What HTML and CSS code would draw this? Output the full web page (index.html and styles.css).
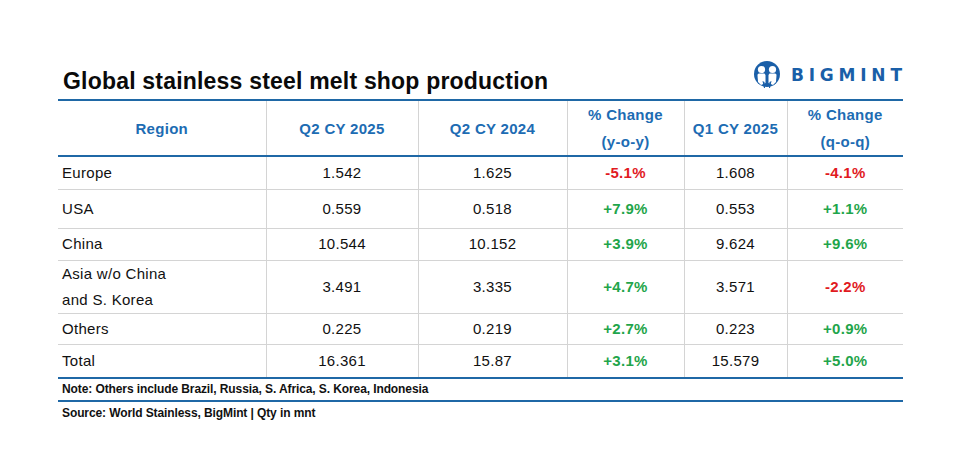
FILE: index.html
```html
<!DOCTYPE html>
<html>
<head>
<meta charset="utf-8">
<link rel="stylesheet" href="styles.css">
</head>
<body>
<div class="page">
  <div class="head">
    <h1 class="title">Global stainless steel melt shop production</h1>
    <div class="logo">
      <svg class="logo-icon" width="30" height="28" viewBox="0 0 30 28">
        <circle cx="15" cy="13" r="13" fill="#1a5fa8"/>
        <circle cx="9.5" cy="8.5" r="3.6" fill="#fff"/>
        <circle cx="20.5" cy="8.5" r="3.6" fill="#fff"/>
        <path d="M5.5 14 Q5.5 12.5 7 12.5 L12.5 12.5 L13.5 14 L13.5 22 L9 24 L6 21 Z" fill="#fff"/>
        <path d="M24.5 14 Q24.5 12.5 23 12.5 L17.5 12.5 L16.5 14 L16.5 22 L21 24 L24 21 Z" fill="#fff"/>
        <path d="M10.5 20 L12 27 L13 27 L12.5 21 Z M19.5 20 L18 27 L17 27 L17.5 21 Z" fill="#1a5fa8"/>
      </svg>
      <span class="logo-text">BIGMINT</span>
    </div>
  </div>
  <table class="data">
    <colgroup>
      <col class="c1"><col class="c2"><col class="c3"><col class="c4"><col class="c5"><col class="c6">
    </colgroup>
    <thead>
      <tr>
        <th>Region</th>
        <th>Q2 CY 2025</th>
        <th>Q2 CY 2024</th>
        <th>% Change<br>(y-o-y)</th>
        <th>Q1 CY 2025</th>
        <th>% Change<br>(q-o-q)</th>
      </tr>
    </thead>
    <tbody>
      <tr><td class="reg">Europe</td><td>1.542</td><td>1.625</td><td class="neg">-5.1%</td><td>1.608</td><td class="neg">-4.1%</td></tr>
      <tr><td class="reg">USA</td><td>0.559</td><td>0.518</td><td class="pos">+7.9%</td><td>0.553</td><td class="pos">+1.1%</td></tr>
      <tr><td class="reg">China</td><td>10.544</td><td>10.152</td><td class="pos">+3.9%</td><td>9.624</td><td class="pos">+9.6%</td></tr>
      <tr><td class="reg">Asia w/o China<br>and S. Korea</td><td>3.491</td><td>3.335</td><td class="pos">+4.7%</td><td>3.571</td><td class="neg">-2.2%</td></tr>
      <tr><td class="reg">Others</td><td>0.225</td><td>0.219</td><td class="pos">+2.7%</td><td>0.223</td><td class="pos">+0.9%</td></tr>
      <tr><td class="reg">Total</td><td>16.361</td><td>15.87</td><td class="pos">+3.1%</td><td>15.579</td><td class="pos">+5.0%</td></tr>
    </tbody>
  </table>
  <div class="note">Note: Others include Brazil, Russia, S. Africa, S. Korea, Indonesia</div>
  <div class="source">Source: World Stainless, BigMint | Qty in mnt</div>
</div>
</body>
</html>
```

FILE: styles.css
```css
html, body {
  margin: 0;
  padding: 0;
  background: #fff;
}
.page {
  width: 845px;
  margin-left: 58px;
  padding-top: 60px;
  font-family: "Liberation Sans", Arial, sans-serif;
  color: #111;
}
.head {
  display: flex;
  justify-content: space-between;
  align-items: flex-end;
  height: 39px;
}
.title {
  margin: 0 0 4px 5px;
  font-size: 23px;
  line-height: 28px;
  font-weight: bold;
  letter-spacing: 0.2px;
  color: #0a0a0a;
}
.logo {
  display: flex;
  align-items: center;
  gap: 9px;
  margin-bottom: 10px;
  margin-right: 1px;
}
.logo-icon {
  display: block;
}
.logo-text {
  font-family: "DejaVu Sans", sans-serif;
  font-size: 17px;
  line-height: 20px;
  font-weight: bold;
  letter-spacing: 4.8px;
  margin-right: -4.8px;
  color: #1a5fa8;
}
.data {
  width: 845px;
  border-collapse: collapse;
  table-layout: fixed;
  font-size: 15px;
  letter-spacing: 0.3px;
}
.c1 { width: 208px; }
.c2 { width: 152px; }
.c3 { width: 149px; }
.c4 { width: 117px; }
.c5 { width: 103px; }
.c6 { width: 116px; }
.data th {
  color: #1d6cb3;
  font-weight: bold;
  line-height: 27px;
  height: 49px;
  padding: 0;
  text-align: center;
  border-top: 2px solid #1f68a6;
  border-bottom: 2px solid #1f68a6;
  border-left: 1px solid #d4d4d4;
}
.data th:first-child,
.data td:first-child {
  border-left: none;
}
.data td {
  padding: 0;
  text-align: center;
  line-height: 26px;
  border-top: 1px solid #d4d4d4;
  border-left: 1px solid #d4d4d4;
}
.data td.reg {
  text-align: left;
  padding-left: 4px;
}
.data tbody tr:first-child td { border-top: none; }
.data tbody tr:nth-child(1) { height: 33px; }
.data tbody tr:nth-child(2) { height: 39px; }
.data tbody tr:nth-child(3) { height: 32px; }
.data tbody tr:nth-child(4) { height: 53px; }
.data tbody tr:nth-child(5) { height: 31px; }
.data tbody tr:nth-child(6) { height: 34px; }
.data tbody tr:last-child td {
  border-bottom: 2px solid #1f68a6;
}
.data td.neg {
  color: #e11b1f;
  font-weight: bold;
}
.data td.pos {
  color: #1fa54b;
  font-weight: bold;
}
.note {
  font-size: 12px;
  font-weight: bold;
  letter-spacing: -0.1px;
  line-height: 21px;
  padding-left: 4px;
  border-bottom: 2px solid #1f68a6;
  color: #111;
}
.source {
  font-size: 12px;
  font-weight: bold;
  letter-spacing: -0.1px;
  line-height: 22px;
  padding-left: 4px;
  color: #111;
}
```
